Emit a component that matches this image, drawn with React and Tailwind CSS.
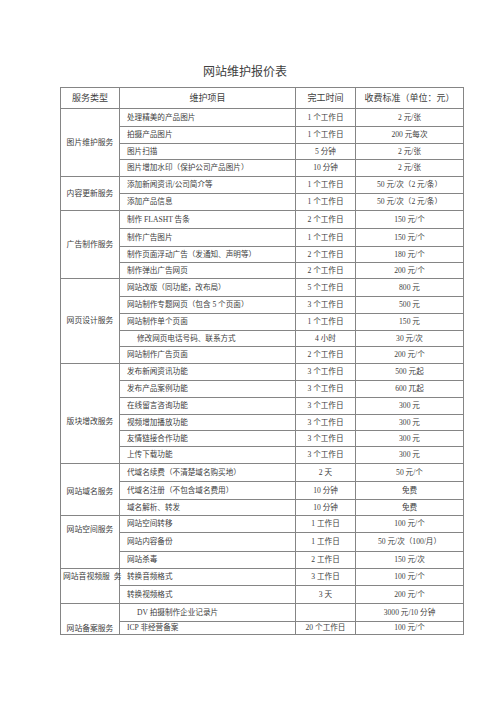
import React from 'react';

// 报价表数据：每组一个服务类型，rows = [项目, 完工时间, 收费标准, 行高, 缩进]
const groups = [
  {
    name: '图片维护服务',
    align: 'align-middle',
    rows: [
      ['处理精美的产品图片', '1 个工作日', '2 元/张', 18],
      ['拍摄产品图片', '1 个工作日', '200 元每次', 17],
      ['图片扫描', '5 分钟', '2 元/张', 16],
      ['图片增加水印（保护公司产品图片）', '10 分钟', '2 元/张', 17],
    ],
  },
  {
    name: '内容更新服务',
    align: 'align-middle',
    rows: [
      ['添加新闻资讯/公司简介等', '1 个工作日', '50 元/次（2 元/条）', 17],
      ['添加产品信息', '1 个工作日', '50 元/次（2 元/条）', 17],
    ],
  },
  {
    name: '广告制作服务',
    align: 'align-middle',
    rows: [
      ['制作 FLASHT 告条', '2 个工作日', '150 元/个', 18],
      ['制作广告图片', '1 个工作日', '150 元/个', 18],
      ['制作页面浮动广告（发通知、声明等）', '2 个工作日', '180 元/个', 16],
      ['制作弹出广告网页', '2 个工作日', '200 元/个', 16],
    ],
  },
  {
    name: '网页设计服务',
    align: 'align-middle',
    rows: [
      ['网站改版（同功能，改布局）', '5 个工作日', '800 元', 18],
      ['网站制作专题网页（包含 5 个页面）', '3 个工作日', '500 元', 17],
      ['网站制作单个页面', '1 个工作日', '150 元', 17],
      ['修改网页电话号码、联系方式', '4 小时', '30 元/次', 16, true],
      ['网站制作广告页面', '2 个工作日', '200 元/个', 17],
    ],
  },
  {
    name: '版块增改服务',
    align: 'align-middle pt-[16px]',
    rows: [
      ['发布新闻资讯功能', '3 个工作日', '500 元起', 17],
      ['发布产品案例功能', '3 个工作日', '600 兀起', 17],
      ['在线留言咨询功能', '3 个工作日', '300 元', 17],
      ['视频增加播放功能', '3 个工作日', '300 元', 16],
      ['友情链接合作功能', '3 个工作日', '300 元', 16],
      ['上传下载功能', '3 个工作日', '300 元', 17],
    ],
  },
  {
    name: '网站域名服务',
    align: 'align-middle pt-[4px]',
    rows: [
      ['代域名续费（不清楚域名购买地）', '2 天', '50 元/个', 18],
      ['代域名注册（不包含域名费用）', '10 分钟', '免费', 18],
      ['域名解析、转发', '10 分钟', '免费', 16],
    ],
  },
  {
    name: '网站空间服务',
    align: 'align-top pt-[9px]',
    rows: [
      ['网站空间转移', '1 工作日', '100 元/个', 17],
      ['网站内容备份', '1 工作日', '50 元/次（100/月）', 19],
      ['网站杀毒', '2 工作日', '150 元/次', 17],
    ],
  },
  {
    name: '网站音视频服\u00a0\u00a0务',
    align: 'align-top pt-[3px] text-left pl-[2px]',
    rows: [
      ['转换音频格式', '3 工作日', '100 元/个', 17],
      ['转换视频格式', '3 天', '200 元/个', 18],
    ],
  },
  {
    name: '网站备案服务',
    align: 'align-bottom',
    rows: [
      ['DV 拍摄制作企业记录片', '', '3000 元/10 分钟', 18, true],
      ['ICP 非经营备案', '20 个工作日', '100 元/个', 13],
    ],
  },
];

const cell = 'border border-[#858585] p-0 leading-[10px]';

export default function App() {
  return (
    <div className="w-[500px] h-[708px] bg-white pt-[64px] text-[#404040] font-[family-name:'Liberation_Serif','Noto_Sans_CJK_SC',serif]">
      <div className="pl-[203px] text-[12px] leading-[16px] h-[16px]">网站维护报价表</div>

      <table className="mt-[7px] ml-[60px] w-[403px] table-fixed border-collapse">
        <colgroup>
          <col className="w-[59px]" />
          <col className="w-[176px]" />
          <col className="w-[60px]" />
          <col className="w-[108px]" />
        </colgroup>
        <thead>
          <tr className="h-[21px] text-[9px]">
            <th className={`${cell} font-normal text-center`}>服务类型</th>
            <th className={`${cell} font-normal text-center`}>维护项目</th>
            <th className={`${cell} font-normal text-center`}>完工时间</th>
            <th className={`${cell} font-normal text-center`}>收费标准（单位：元）</th>
          </tr>
        </thead>
        <tbody className="text-[7.6px]">
          {groups.map((g) =>
            g.rows.map((r, i) => (
              <tr key={g.name + i} style={{ height: r[3] }}>
                {i === 0 && (
                  <td
                    rowSpan={g.rows.length}
                    className={`${cell} ${g.align} text-center whitespace-nowrap overflow-visible text-[7.8px]`}
                  >
                    {g.name}
                  </td>
                )}
                <td className={`${cell} align-middle whitespace-nowrap ${r[4] ? 'pl-[17px]' : 'pl-[7px]'}`}>
                  {r[0]}
                </td>
                <td className={`${cell} align-middle text-center whitespace-nowrap`}>{r[1]}</td>
                <td className={`${cell} align-middle text-center whitespace-nowrap`}>{r[2]}</td>
              </tr>
            ))
          )}
        </tbody>
      </table>
    </div>
  );
}
